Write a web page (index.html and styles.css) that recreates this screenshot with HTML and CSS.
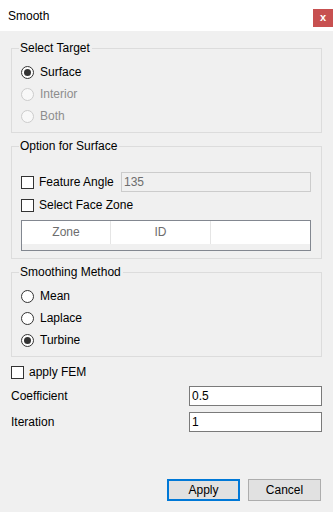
FILE: index.html
```html
<!DOCTYPE html>
<html lang="en">
<head>
  <meta charset="UTF-8">
  <title>Smooth</title>
  <link rel="stylesheet" href="styles.css">
</head>
<body>
  <!-- Title bar -->
  <header class="titlebar">
    <span class="title">Smooth</span>
    <span class="close">x</span>
  </header>

  <main class="content">
    <fieldset class="group group-target">
      <legend>Select Target</legend>
      <div class="opt"><span class="radio checked"></span>Surface</div>
      <div class="opt disabled"><span class="radio"></span>Interior</div>
      <div class="opt disabled"><span class="radio"></span>Both</div>
    </fieldset>

    <fieldset class="group group-surface">
      <legend>Option for Surface</legend>
      <div class="row angle-row">
        <div class="opt"><span class="check"></span>Feature Angle</div>
        <div class="field field-disabled angle-field">135</div>
      </div>
      <div class="row zone-row">
        <div class="opt"><span class="check"></span>Select Face Zone</div>
      </div>
      <div class="zone-table">
        <div class="zone-head">
          <div class="col col-zone">Zone</div>
          <div class="col col-id">ID</div>
          <div class="col col-rest"></div>
        </div>
      </div>
    </fieldset>

    <fieldset class="group group-method">
      <legend>Smoothing Method</legend>
      <div class="opt"><span class="radio"></span>Mean</div>
      <div class="opt"><span class="radio"></span>Laplace</div>
      <div class="opt"><span class="radio checked"></span>Turbine</div>
    </fieldset>

    <div class="row fem-row">
      <div class="opt"><span class="check"></span>apply FEM</div>
    </div>
    <div class="row param-row">
      <span class="label">Coefficient</span>
      <div class="field">0.5</div>
    </div>
    <div class="row param-row iter-row">
      <span class="label">Iteration</span>
      <div class="field">1</div>
    </div>
  </main>

  <footer class="buttons">
    <button class="btn btn-default">Apply</button>
    <button class="btn">Cancel</button>
  </footer>
</body>
</html>
```

FILE: styles.css
```css
/* Reset & General */
* {
  margin: 0;
  padding: 0;
  box-sizing: border-box;
}

body {
  width: 333px;
  height: 512px;
  background-color: #f0f0f0;
  font-family: 'Liberation Sans', Arial, sans-serif;
  font-size: 12px;
  color: #000;
  display: flex;
  flex-direction: column;
  overflow: hidden;
}

/* Title bar */
.titlebar {
  height: 31px;
  background-color: #ffffff;
  display: flex;
  align-items: center;
  justify-content: space-between;
  padding-left: 8px;
}

.title {
  font-size: 12px;
  color: #000;
}

.close {
  width: 20px;
  height: 18px;
  background-color: #c75050;
  color: #fff;
  font-weight: bold;
  font-size: 11px;
  line-height: 16px;
  text-align: center;
  align-self: flex-start;
  margin-top: 9px;
}

/* Main Content */
.content {
  padding: 10px 11px 0 11px;
  display: flex;
  flex-direction: column;
}

.group {
  border: 1px solid #dcdcdc;
  padding: 0 9px 0 9px;
  min-width: 0;
}

.group legend {
  padding: 0 2px 0 1px;
  margin-left: -2px;
  line-height: 14px;
  height: 14px;
}

.group-target {
  padding-top: 6px;
  padding-bottom: 5px;
}

.group-surface {
  margin-top: 6px;
  padding-top: 19px;
  padding-bottom: 7px;
}

.group-method {
  margin-top: 6px;
  padding-top: 6px;
  padding-bottom: 5px;
}

/* Radio & checkbox options */
.opt {
  display: flex;
  align-items: center;
  height: 22px;
}

.opt.disabled {
  color: #8d8d8d;
}

.radio {
  width: 13px;
  height: 13px;
  border: 1px solid #333333;
  border-radius: 50%;
  background-color: #ffffff;
  margin-right: 6px;
  position: relative;
  flex-shrink: 0;
}

.radio.checked::after {
  content: "";
  position: absolute;
  left: 2px;
  top: 2px;
  width: 7px;
  height: 7px;
  border-radius: 50%;
  background-color: #333333;
}

.opt.disabled .radio {
  border-color: #cccccc;
  background-color: #f8f8f8;
}

.check {
  width: 13px;
  height: 13px;
  border: 1px solid #333333;
  background-color: #ffffff;
  margin-right: 5px;
  flex-shrink: 0;
}

.row {
  display: flex;
  align-items: center;
  height: 20px;
}

.row .opt {
  height: 20px;
}

/* Text fields */
.field {
  height: 20px;
  border: 1px solid #7a7a7a;
  background-color: #ffffff;
  padding-left: 2px;
  line-height: 18px;
  width: 133px;
  margin-left: auto;
}

.field-disabled {
  border-color: #cccccc;
  background-color: #f0f0f0;
  color: #6d6d6d;
}

.angle-field {
  width: 190px;
  margin-left: auto;
  margin-right: 1px;
}

.zone-row {
  margin-top: 3px;
}

/* Zone table */
.zone-table {
  margin-top: 5px;
  margin-right: 1px;
  height: 31px;
  border: 1px solid #828790;
  background-color: #f0f0f0;
}

.zone-head {
  display: flex;
  height: 23px;
  background-color: #ffffff;
}

.col {
  line-height: 23px;
  text-align: center;
  color: #6d6d6d;
  border-right: 1px solid #e5e5e5;
}

.col-zone {
  width: 89px;
}

.col-id {
  width: 100px;
}

.col-rest {
  flex: 1;
  border-right: none;
}

/* Bottom options */
.fem-row {
  margin-top: 5px;
}

.param-row {
  margin-top: 4px;
}

.iter-row {
  margin-top: 6px;
}

/* Buttons */
.buttons {
  margin-top: auto;
  margin-bottom: 11px;
  display: flex;
  justify-content: flex-end;
  gap: 8px;
  padding-right: 12px;
}

.btn {
  width: 73px;
  height: 22px;
  background-color: #e1e1e1;
  border: 1px solid #adadad;
  font-family: 'Liberation Sans', Arial, sans-serif;
  font-size: 12px;
  color: #000;
}

.btn-default {
  border: 2px solid #0078d7;
}
```
